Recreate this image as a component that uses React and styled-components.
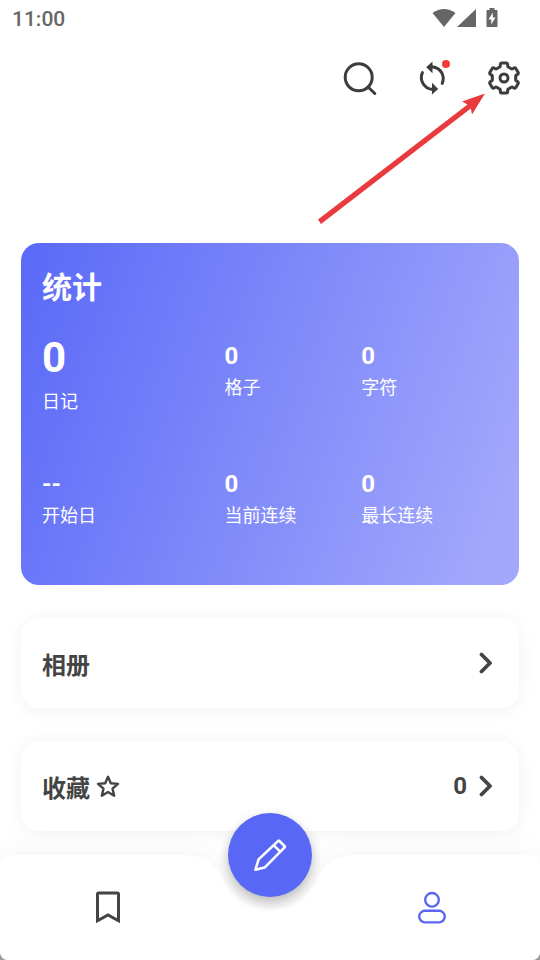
import React from "react";
import styled, { createGlobalStyle } from "styled-components";

const stats = [
  { value: "0", label: "日记", big: true },
  { value: "0", label: "格子" },
  { value: "0", label: "字符" },
  { value: "--", label: "开始日" },
  { value: "0", label: "当前连续" },
  { value: "0", label: "最长连续" },
];

const polar = (r, deg) => {
  const a = (deg * Math.PI) / 180;
  return `${(18 + r * Math.cos(a)).toFixed(2)} ${(18 + r * Math.sin(a)).toFixed(2)}`;
};

// six rounded teeth, the first one pointing up
const gearPath =
  [0, 1, 2, 3, 4, 5]
    .map((i) => {
      const t = i * 60 - 90;
      return [
        `${i === 0 ? "M" : "L"}${polar(11.8, t - 22)}`,
        `Q${polar(11.8, t - 17)} ${polar(13.4, t - 16)}`,
        `Q${polar(15.2, t - 15)} ${polar(15.2, t - 9)}`,
        `L${polar(15.2, t + 9)}`,
        `Q${polar(15.2, t + 15)} ${polar(13.4, t + 16)}`,
        `Q${polar(11.8, t + 17)} ${polar(11.8, t + 22)}`,
      ].join(" ");
    })
    .join(" ") + "Z";

const Chevron = () => (
  <svg width='14' height='22' viewBox='0 0 14 22' aria-hidden='true'>
    <path
      d='M2.5 2.5L11 11L2.5 19.5'
      fill='none'
      stroke='#444'
      strokeWidth='3.8'
      strokeLinecap='round'
      strokeLinejoin='round'
    />
  </svg>
);

const App = () => {
  return (
    <>
      <GlobalStyle />
      <Screen>
        <StatusBar>
          <Time>11:00</Time>
          <StatusIcons width='68' height='20' viewBox='0 0 68 20'>
            <path d='M0.5 5Q12 -3 23.5 5L12 19Z' />
            <path d='M25 19L44 1V19Z' />
            <path
              fillRule='evenodd'
              d='M57.5 0H62.5V2H64.5Q65.5 2 65.5 3V18Q65.5 19 64.5 19H55.5Q54.5 19 54.5 18V3Q54.5 2 55.5 2H57.5ZM60.8 4.5L56.5 11.5H59.3V16.5L63.5 9.5H60.8Z'
            />
          </StatusIcons>
        </StatusBar>

        <Toolbar>
          <IconButton aria-label='搜索'>
            <svg width='36' height='36' viewBox='0 0 36 36'>
              <Line d='M16.7 3.8A13.5 13.5 0 1 1 16.7 30.8A13.5 13.5 0 1 1 16.7 3.8Z' />
              <Line d='M26 27L32.8 33.5' strokeLinecap='round' />
            </svg>
          </IconButton>
          <IconButton aria-label='同步'>
            <svg width='36' height='36' viewBox='0 0 36 36'>
              <Line d='M8.4 12.6C5.6 19 8.5 28 18.5 29.6' strokeLinecap='round' />
              <Line d='M28.2 23.4C31 17 28 8 18 6.8' strokeLinecap='round' />
              <path d='M18.5 1.6V13.2L12.2 7.3Z' fill='#3c3c3c' />
              <path d='M18 22.8V34.6L24.2 29Z' fill='#3c3c3c' />
            </svg>
            <Dot />
          </IconButton>
          <IconButton aria-label='设置'>
            <svg width='36' height='36' viewBox='0 0 36 36'>
              <Line d={gearPath} strokeLinejoin='round' />
              <circle cx='18' cy='18' r='4' fill='none' stroke='#3c3c3c' strokeWidth='3' />
            </svg>
          </IconButton>
          <Pointer width='168' height='132' viewBox='0 0 168 132'>
            <path d='M0 126.5L149.5 11.5L144 8.5L167 0.5L154 21.5L152.8 15.5L3 131Z' />
          </Pointer>
        </Toolbar>

        <Content>
          <StatsCard>
            <StatsTitle>统计</StatsTitle>
            <StatsGrid>
              {stats.map((s) => (
                <Stat key={s.label}>
                  <StatValue $big={s.big}>{s.value}</StatValue>
                  <StatLabel>{s.label}</StatLabel>
                </Stat>
              ))}
            </StatsGrid>
          </StatsCard>

          <RowCard>
            <RowTitle>相册</RowTitle>
            <Chevron />
          </RowCard>
          <RowCard>
            <RowTitle>
              收藏
              <svg width='24' height='24' viewBox='0 0 24 24' aria-hidden='true'>
                <path
                  d='M12 2.8L14.8 9.3L22 9.9L16.5 14.6L18.2 21.7L12 17.9L5.8 21.7L7.5 14.6L2 9.9L9.2 9.3Z'
                  fill='none'
                  stroke='#444'
                  strokeWidth='2.4'
                  strokeLinejoin='round'
                />
              </svg>
            </RowTitle>
            <RowEnd>
              0
              <Chevron />
            </RowEnd>
          </RowCard>
        </Content>

        <NavBar>
          <NavBackdrop>
            <NavSide $left />
            <svg width='180' height='105' viewBox='0 0 180 105'>
              <path
                d='M0 0C22 0 32 6 40 18C51 40 66 54 90 54C114 54 129 40 140 18C148 6 158 0 180 0V105H0Z'
                fill='#fff'
              />
            </svg>
            <NavSide />
          </NavBackdrop>
          <NavButton aria-label='书签'>
            <svg width='36' height='36' viewBox='0 0 36 36'>
              <path
                d='M7.5 30.8V4Q7.5 3 8.5 3H27.5Q28.5 3 28.5 4V30.8L18 25Z'
                fill='none'
                stroke='#444'
                strokeWidth='3'
              />
            </svg>
          </NavButton>
          <AddButton aria-label='写日记'>
            <svg width='36' height='36' viewBox='0 0 36 36'>
              <path
                d='M3.4 32.8L6.6 22.4L26.2 3.9Q26.8 3.4 27.4 4L32.6 9.2Q33.2 9.8 32.6 10.4L12.6 30.6ZM21.8 8.4L28.2 14.6'
                fill='none'
                stroke='#fff'
                strokeWidth='2.6'
                strokeLinejoin='round'
              />
            </svg>
          </AddButton>
          <NavButton aria-label='我的'>
            <svg width='36' height='36' viewBox='0 0 36 36' fill='none' stroke='#5b67ee' strokeWidth='2.4'>
              <circle cx='18' cy='9.8' r='6.8' />
              <rect x='5.2' y='20.8' width='25.6' height='11.6' rx='5.8' />
            </svg>
          </NavButton>
        </NavBar>
      </Screen>
    </>
  );
};

export default App;

const GlobalStyle = createGlobalStyle`
  * {
    box-sizing: border-box;
  }
  body {
    margin: 0;
    background-color: #9a9a9a;
    font-family: Roboto, "Noto Sans CJK SC", sans-serif;
  }
  svg {
    display: block;
  }
`;

const Screen = styled.div`
  min-height: 100vh;
  display: flex;
  flex-direction: column;
  background-color: #fff;
  border-radius: 0 0 8px 8px;
  overflow: hidden;
`;

const StatusBar = styled.div`
  height: 36px;
  padding: 0 40px 0 12px;
  display: flex;
  align-items: center;
  justify-content: space-between;
`;

const Time = styled.div`
  padding-top: 2px;
  font-size: 21px;
  font-weight: 500;
  line-height: 34px;
  color: #666;
`;

const StatusIcons = styled.svg`
  fill: #666;
`;

const Toolbar = styled.div`
  position: relative;
  display: flex;
  justify-content: flex-end;
  gap: 24px;
  padding: 18px 12px 0;
`;

const PlainButton = styled.button`
  padding: 0;
  border: none;
  background: none;
  font: inherit;
  cursor: pointer;
  display: flex;
  align-items: center;
  justify-content: center;
`;

const IconButton = styled(PlainButton)`
  position: relative;
  width: 48px;
  height: 48px;
`;

const Line = styled.path`
  fill: none;
  stroke: #3c3c3c;
  stroke-width: 3px;
`;

const Dot = styled.span`
  position: absolute;
  top: 6px;
  right: 6px;
  width: 8px;
  height: 8px;
  border-radius: 50%;
  background-color: #f23a36;
`;

const Pointer = styled.svg`
  position: absolute;
  top: 57px;
  right: 54px;
  fill: #e93b3d;
  pointer-events: none;
`;

const Content = styled.div`
  display: flex;
  flex-direction: column;
  gap: 33px;
  padding: 141px 21px 24px;
`;

const StatsCard = styled.div`
  padding: 25px 21px 53px;
  border-radius: 18px;
  background: linear-gradient(110deg, #5a69f8 0%, #a2a8fb 94%);
  color: #fff;
`;

const StatsTitle = styled.div`
  font-size: 30px;
  font-weight: 700;
  line-height: 40px;
  margin-bottom: 32px;
`;

const StatsGrid = styled.div`
  display: grid;
  grid-template-columns: 4fr 3fr 3fr;
  row-gap: 50px;
`;

const Stat = styled.div``;

const StatValue = styled.div`
  font-size: ${(props) => (props.$big ? "42px" : "24px")};
  line-height: ${(props) => (props.$big ? "36px" : "32px")};
  margin-bottom: ${(props) => (props.$big ? "10px" : "0")};
  font-weight: 700;
`;

const StatLabel = styled.div`
  font-size: 18px;
  line-height: 32px;
`;

const RowCard = styled(PlainButton)`
  height: 90px;
  padding: 0 26px 0 21px;
  justify-content: space-between;
  border-radius: 18px;
  background-color: #fff;
  box-shadow: 0 2px 18px rgba(0, 0, 0, 0.06);
  color: #444;
`;

const RowTitle = styled.span`
  display: flex;
  align-items: center;
  gap: 6px;
  font-size: 24px;
  font-weight: 700;
`;

const RowEnd = styled.span`
  display: flex;
  align-items: center;
  gap: 12px;
  font-size: 24px;
  font-weight: 700;
`;

const NavBar = styled.nav`
  position: relative;
  margin-top: auto;
  height: 105px;
  display: grid;
  grid-template-columns: 2fr 1fr 2fr;
  align-items: center;
  justify-items: center;
`;

const NavBackdrop = styled.div`
  position: absolute;
  inset: 0;
  display: flex;
  filter: drop-shadow(0 0 12px rgba(0, 0, 0, 0.05));
`;

const NavSide = styled.div`
  flex: 1;
  background-color: #fff;
  border-radius: ${(props) => (props.$left ? "12px 0 0 8px" : "0 12px 8px 0")};
`;

const NavButton = styled(PlainButton)`
  position: relative;
  width: 48px;
  height: 48px;
`;

const AddButton = styled(PlainButton)`
  position: relative;
  align-self: start;
  margin-top: -42px;
  width: 84px;
  height: 84px;
  border-radius: 50%;
  background-color: #5967f6;
  box-shadow: 0 5px 12px rgba(0, 0, 0, 0.28);
`;
